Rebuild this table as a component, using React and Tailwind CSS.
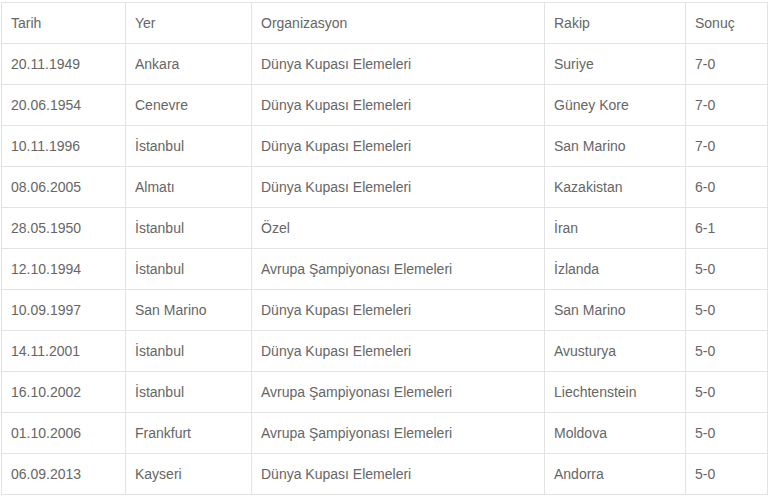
import React from 'react';

const rows = [
  ['20.11.1949', 'Ankara', 'Dünya Kupası Elemeleri', 'Suriye', '7-0'],
  ['20.06.1954', 'Cenevre', 'Dünya Kupası Elemeleri', 'Güney Kore', '7-0'],
  ['10.11.1996', 'İstanbul', 'Dünya Kupası Elemeleri', 'San Marino', '7-0'],
  ['08.06.2005', 'Almatı', 'Dünya Kupası Elemeleri', 'Kazakistan', '6-0'],
  ['28.05.1950', 'İstanbul', 'Özel', 'İran', '6-1'],
  ['12.10.1994', 'İstanbul', 'Avrupa Şampiyonası Elemeleri', 'İzlanda', '5-0'],
  ['10.09.1997', 'San Marino', 'Dünya Kupası Elemeleri', 'San Marino', '5-0'],
  ['14.11.2001', 'İstanbul', 'Dünya Kupası Elemeleri', 'Avusturya', '5-0'],
  ['16.10.2002', 'İstanbul', 'Avrupa Şampiyonası Elemeleri', 'Liechtenstein', '5-0'],
  ['01.10.2006', 'Frankfurt', 'Avrupa Şampiyonası Elemeleri', 'Moldova', '5-0'],
  ['06.09.2013', 'Kayseri', 'Dünya Kupası Elemeleri', 'Andorra', '5-0'],
];

const headers = ['Tarih', 'Yer', 'Organizasyon', 'Rakip', 'Sonuç'];

const App = () => {
  return (
    <div className="bg-white min-h-[498px] pt-[2px] pl-[1px] font-['Liberation_Sans'] text-[14px] text-[#666]">
      <table className="w-[766px] table-fixed border-collapse">
        <colgroup>
          <col className="w-[124px]" />
          <col className="w-[126px]" />
          <col className="w-[293px]" />
          <col className="w-[141px]" />
          <col className="w-[82px]" />
        </colgroup>
        <thead>
          <tr>
            {headers.map((h) => (
              <th key={h} className="h-[41px] border border-[#e3e3e3] px-[9px] text-left font-normal">
                {h}
              </th>
            ))}
          </tr>
        </thead>
        <tbody>
          {rows.map((r, i) => (
            <tr key={i}>
              {r.map((c, j) => (
                <td key={j} className="h-[41px] border border-[#e3e3e3] px-[9px]">
                  {c}
                </td>
              ))}
            </tr>
          ))}
        </tbody>
      </table>
    </div>
  );
};

export default App;
